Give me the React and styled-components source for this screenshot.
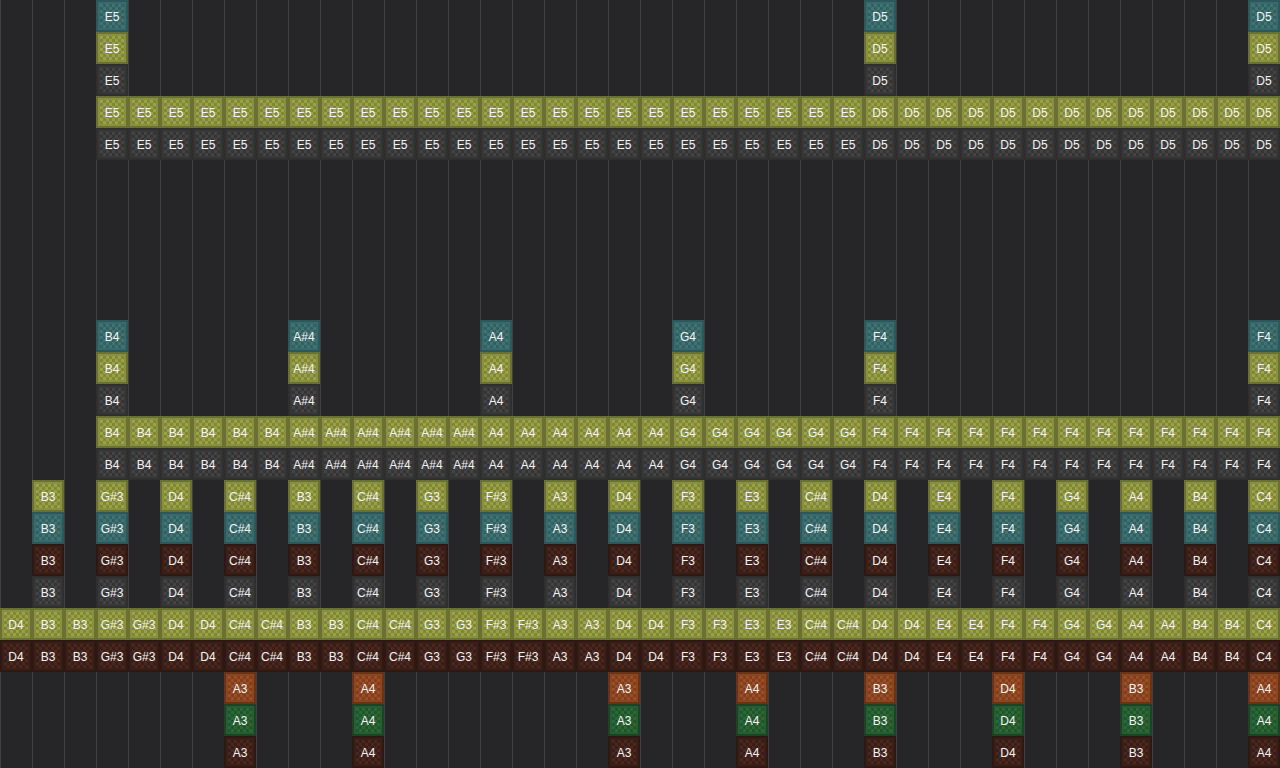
import React from 'react';
import styled, { createGlobalStyle, css } from 'styled-components';

const Global = createGlobalStyle`
  html, body { margin: 0; padding: 0; background: #262628; overflow: hidden; }
`;

const palettes = {
  teal: { edge: '#2d5758', band: '#386a6b', base: '#407475', dot: '#335f61' },
  olive: { edge: '#6a6f33', band: '#899040', base: '#9aa245', dot: '#7f8639' },
  dark: { edge: '#2f2f30', band: '#383839', base: '#444445', dot: '#343435' },
  red: { edge: '#2e1813', band: '#3b201a', base: '#4a281f', dot: '#391e18' },
  orange: { edge: '#6a3318', band: '#8a4521', base: '#9c4e26', dot: '#7f3f1d' },
  green: { edge: '#1c4325', band: '#275d32', base: '#2c6938', dot: '#235429' },
};

const Board = styled.div`
  width: 1280px;
  height: 768px;
  overflow: hidden;
  background-color: #262628;
  background-image: repeating-linear-gradient(to right, #404042 0, #404042 1px, transparent 1px, transparent 32px);
`;

const Row = styled.div`
  display: grid;
  grid-template-columns: repeat(40, 32px);
  grid-auto-rows: 32px;
  height: 32px;
`;

const Gap = styled.div`
  height: ${(p) => p.$rows * 32}px;
`;

const Tile = styled.div`
  grid-column: ${(p) => p.$col + 1};
  grid-row: 1;
  box-sizing: border-box;
  display: flex;
  align-items: center;
  justify-content: center;
  border: 2px solid ${(p) => palettes[p.$tone].edge};
  ${(p) => css`
    box-shadow: inset 0 0 0 2px ${palettes[p.$tone].band};
    background-color: ${palettes[p.$tone].base};
    background-image: conic-gradient(
      ${palettes[p.$tone].dot} 25%, transparent 0 50%, ${palettes[p.$tone].dot} 0 75%, transparent 0
    );
    background-size: 6px 6px;
    background-position: 2px 2px;
  `}
  color: #f4f4f4;
  font: 12px/1 "Liberation Sans", Arial, sans-serif;
  padding-top: 2px;
  white-space: nowrap;
`;

const melody = ['B3','G#3','D4','C#4','B3','C#4','G3','F#3','A3','D4','F3','E3','C#4','D4','E4','F4','G4','A4','B4','C4'];
const alt = melody.map((n, i) => [2 * i + 1, n]);
const bass = [[0,'D4'],[1,'B3'],[2,'B3']];
for (let i = 1; i < 20; i++) {
  bass.push([2 * i + 1, melody[i]]);
  if (i < 19) bass.push([2 * i + 2, melody[i]]);
}
const span = (ranges) => ranges.flatMap(([a, b, n]) => Array.from({ length: b - a + 1 }, (_, k) => [a + k, n]));

const high = [[3,'E5'],[27,'D5'],[39,'D5']];
const highRun = span([[3,26,'E5'],[27,39,'D5']]);
const mid = [[3,'B4'],[9,'A#4'],[15,'A4'],[21,'G4'],[27,'F4'],[39,'F4']];
const midRun = span([[3,8,'B4'],[9,14,'A#4'],[15,20,'A4'],[21,26,'G4'],[27,39,'F4']]);
const low = [[7,'A3'],[11,'A4'],[19,'A3'],[23,'A4'],[27,'B3'],[31,'D4'],[35,'B3'],[39,'A4']];

const layout = [
  ['teal', high], ['olive', high], ['dark', high], ['olive', highRun], ['dark', highRun],
  { gap: 5 },
  ['teal', mid], ['olive', mid], ['dark', mid], ['olive', midRun], ['dark', midRun],
  ['olive', alt], ['teal', alt], ['red', alt], ['dark', alt],
  ['olive', bass], ['red', bass],
  ['orange', low], ['green', low], ['red', low],
];

export default function App() {
  return (
    <>
      <Global />
      <Board>
        {layout.map((r, i) =>
          r.gap ? (
            <Gap key={i} $rows={r.gap} />
          ) : (
            <Row key={i}>
              {r[1].map(([col, note]) => (
                <Tile key={col} $col={col} $tone={r[0]}>{note}</Tile>
              ))}
            </Row>
          )
        )}
      </Board>
    </>
  );
}
